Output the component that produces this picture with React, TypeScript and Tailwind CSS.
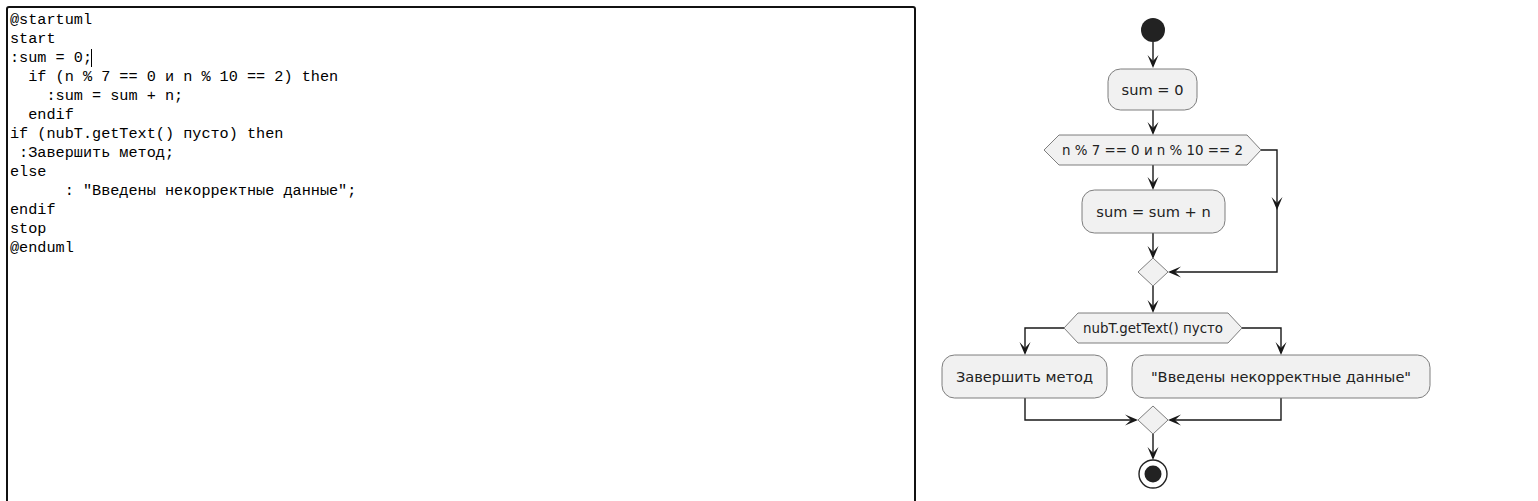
import React from 'react';

const code = [
  '@startuml',
  'start',
  ':sum = 0;',
  '  if (n % 7 == 0 и n % 10 == 2) then',
  '    :sum = sum + n;',
  '  endif',
  'if (nubT.getText() пусто) then',
  ' :Завершить метод;',
  'else',
  '      : "Введены некорректные данные";',
  'endif',
  'stop',
  '@enduml',
];

const LINE = '#181818';
const FILL = '#F1F1F1';
const BORDER = '#6f6f6f';
const FONT = '"DejaVu Sans", Verdana, sans-serif';

// down arrowhead with tip at (x, y)
function ArrowDown({ x, y }: { x: number; y: number }) {
  return <polygon points={`${x - 5.5},${y - 13} ${x},${y} ${x + 5.5},${y - 13} ${x},${y - 7}`} fill={LINE} />;
}
function ArrowRight({ x, y }: { x: number; y: number }) {
  return <polygon points={`${x - 13},${y - 5.5} ${x},${y} ${x - 13},${y + 5.5} ${x - 7},${y}`} fill={LINE} />;
}
function ArrowLeft({ x, y }: { x: number; y: number }) {
  return <polygon points={`${x + 13},${y - 5.5} ${x},${y} ${x + 13},${y + 5.5} ${x + 7},${y}`} fill={LINE} />;
}

function Action({ x1, x2, y1, y2, label, size = 14.6 }: { x1: number; x2: number; y1: number; y2: number; label: string; size?: number }) {
  return (
    <g>
      <rect x={x1} y={y1} width={x2 - x1} height={y2 - y1} rx={12.5} fill={FILL} stroke={BORDER} strokeWidth={0.9} />
      <text x={(x1 + x2) / 2} y={(y1 + y2) / 2 + 5} textAnchor="middle" fontFamily={FONT} fontSize={size} fill="#222">
        {label}
      </text>
    </g>
  );
}

function Hexagon({ l, fl, fr, r, y1, y2, label }: { l: number; fl: number; fr: number; r: number; y1: number; y2: number; label: string }) {
  const m = (y1 + y2) / 2;
  return (
    <g>
      <polygon points={`${l},${m} ${fl},${y1} ${fr},${y1} ${r},${m} ${fr},${y2} ${fl},${y2}`} fill={FILL} stroke={BORDER} strokeWidth={0.9} />
      <text x={(l + r) / 2} y={m + 4.5} textAnchor="middle" fontFamily={FONT} fontSize={13.4} fill="#222">
        {label}
      </text>
    </g>
  );
}

function Diamond({ cx, cy }: { cx: number; cy: number }) {
  return (
    <polygon points={`${cx},${cy - 14} ${cx + 15},${cy} ${cx},${cy + 14} ${cx - 15},${cy}`} fill={FILL} stroke={BORDER} strokeWidth={0.9} />
  );
}

function Diagram() {
  const cx = 1153;
  return (
    <svg viewBox="916 0 622 501" width={622} height={501} className="block shrink-0">
      <g stroke={LINE} strokeWidth={1.4} fill="none">
        <line x1={cx} y1={42} x2={cx} y2={66} />
        <line x1={cx} y1={110} x2={cx} y2={133} />
        <line x1={cx} y1={165} x2={cx} y2={188} />
        <polyline points={`1261,150 1277,150 1277,272 1170,272`} />
        <line x1={cx} y1={233} x2={cx} y2={257} />
        <line x1={cx} y1={286} x2={cx} y2={311} />
        <polyline points={`1064,328 1025,328 1025,353`} />
        <polyline points={`1242,328 1281,328 1281,353`} />
        <polyline points={`1025,398 1025,420 1136,420`} />
        <polyline points={`1281,398 1281,420 1170,420`} />
        <line x1={cx} y1={434} x2={cx} y2={458} />
      </g>

      <circle cx={cx} cy={30} r={12} fill="#222" />
      <ArrowDown x={cx} y={68} />
      <Action x1={1108} x2={1197} y1={69} y2={110} label="sum = 0" />
      <ArrowDown x={cx} y={135} />
      <Hexagon l={1044} fl={1059} fr={1247} r={1261} y1={135} y2={165} label="n % 7 == 0 и n % 10 == 2" />
      <ArrowDown x={1277} y={210} />
      <ArrowDown x={cx} y={190} />
      <Action x1={1082} x2={1225} y1={190} y2={233} label="sum = sum + n" />
      <ArrowDown x={cx} y={259} />
      <Diamond cx={cx} cy={272} />
      <ArrowLeft x={1168} y={272} />
      <ArrowDown x={cx} y={313} />
      <Hexagon l={1064} fl={1078} fr={1228} r={1242} y1={313} y2={343} label="nubT.getText() пусто" />
      <ArrowDown x={1025} y={355} />
      <ArrowDown x={1281} y={355} />
      <Action x1={942} x2={1107} y1={355} y2={398} label="Завершить метод" />
      <Action x1={1132} x2={1430} y1={355} y2={398} label={' "Введены некорректные данные"'} />
      <Diamond cx={cx} cy={420} />
      <ArrowRight x={1138} y={420} />
      <ArrowLeft x={1168} y={420} />
      <ArrowDown x={cx} y={460} />
      <circle cx={cx} cy={474} r={14} fill="none" stroke="#222" strokeWidth={1.4} />
      <circle cx={cx} cy={474} r={8.5} fill="#222" />
    </svg>
  );
}

export default function App() {
  return (
    <div className="flex h-[501px] w-[1538px] overflow-hidden bg-white">
      <div className="ml-[6px] mt-[6px] h-[540px] w-[910px] shrink-0 rounded-[3px] border-2 border-[#111] bg-white pl-[2px] pt-[3px]">
        <pre className="m-0 font-['Liberation_Mono',monospace] text-[15.2px] leading-[19px] text-black">
          {code.map((line, i) => (
            <div key={i} className="relative h-[19px] whitespace-pre">
              {line}
              {i === 2 && <span className="absolute left-[81px] top-0 h-[18px] w-px bg-black" />}
            </div>
          ))}
        </pre>
      </div>
      <Diagram />
    </div>
  );
}
